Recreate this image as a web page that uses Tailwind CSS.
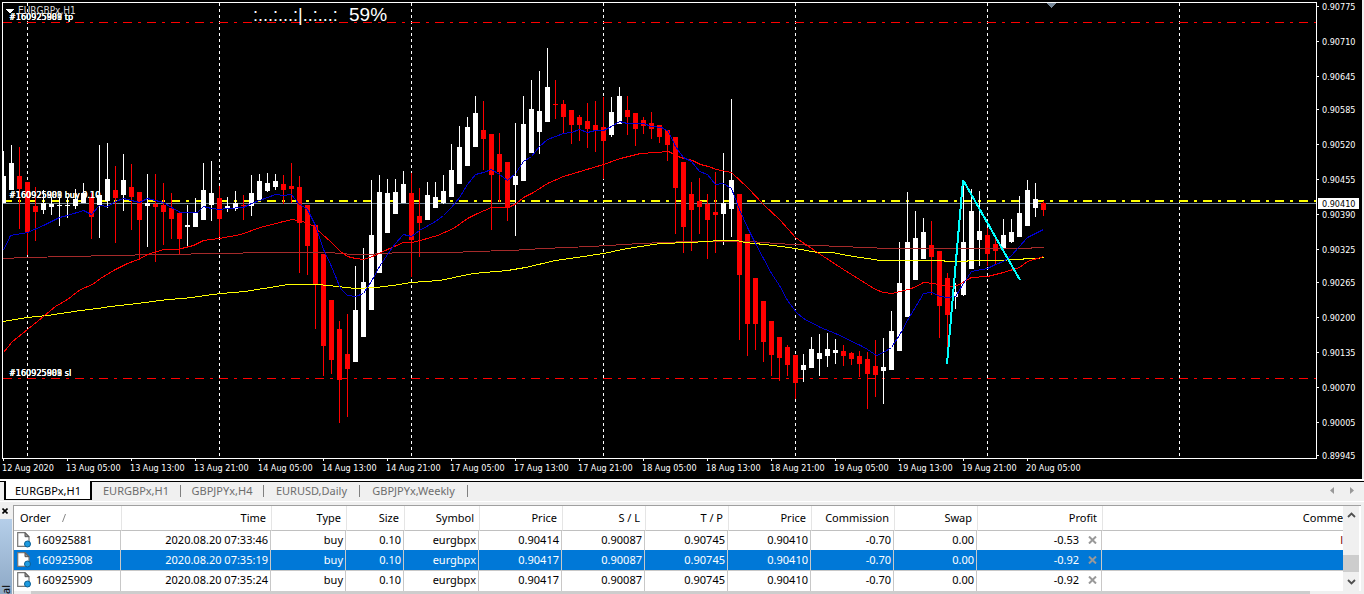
<!DOCTYPE html>
<html lang="en">
<head>
<meta charset="utf-8">
<title>EURGBPx,H1</title>
<script src="https://cdn.jsdelivr.net/npm/@tailwindcss/browser@4"></script>
</head>
<body class="flex h-screen flex-col overflow-hidden bg-[#f0f0f0] font-['Noto_Sans',sans-serif] text-[11px] leading-4 text-black">
<main class="shrink-0 pr-0.5">
<svg id="chart" viewBox="0 0 1362 479" class="block h-auto w-full bg-black font-['DejaVu_Sans_Condensed','DejaVu_Sans',sans-serif] text-[9px] [font-stretch:condensed]" role="img" aria-label="EURGBPx hourly chart">
  <g shape-rendering="crispEdges" fill="none">
    <path stroke="#fff" stroke-dasharray="3 3" d="M27.5 3V456M219.5 3V456M411.5 3V456M603.5 3V456M795.5 3V456M987.5 3V456M1179.5 3V456"/>
    <path stroke="#f00" stroke-dasharray="9 6 3 6" d="M3 22.5H1316M3 378.5H1316"/>
    <path stroke="#ff0" stroke-width="2" stroke-dasharray="9 6 3 6" d="M3 201H1316"/>
    <path stroke="#778899" d="M3 203.5H1316"/>
    <g id="candles"></g>
    <polyline id="slow" stroke="#a52a2a"/>
    <polyline id="trend" stroke="#ff0"/>
    <polyline id="mid" stroke="#f00"/>
    <polyline id="fast" stroke="#0000cd"/>
    <polyline stroke="#0ff" stroke-width="2" stroke-linejoin="bevel" points="947,364 963,180 1020,280"/>
    <path stroke="#fff" d="M2.5 458.5V2.5H1316.5V458.5Z"/>
    <path id="ticks" stroke="#fff"/>
    <path fill="#778899" d="M1046 3h11l-5.500 5z"/>
    <path fill="#fff" d="M5 9h9l-4.500 4.500z"/>
  </g>
  <g id="labels" fill="#fff"></g>
  <rect x="1318" y="198" width="41" height="11" fill="#fff"/>
  <text x="1322" y="207" fill="#000">0.90410</text>
  <text x="18" y="14" fill="#d8d8d8" class="text-[10px]">EURGBPx,H1</text>
  <g fill="#fff" class="font-['Liberation_Sans',Arial,sans-serif] [font-stretch:normal]">
    <text x="253" y="21" class="text-[18px]">:...:...:|..:...:</text>
    <text x="349" y="21" class="text-[19px]">59%</text>
  </g>
</svg>
</main>

<nav class="flex h-[23px] shrink-0 flex-col border-t-2 border-b border-white text-[#6d6d6d]">
  <div class="flex h-5 items-stretch">
    <span class="w-1 border-t border-black"></span>
    <button class="h-[19px] w-22 border-x-2 border-b border-black bg-white pt-px text-center text-black">EURGBPx,H1</button>
    <div class="flex flex-1 items-center border-t border-black pb-0.5">
      <button class="w-[88px] text-center">EURGBPx,H1</button><span class="h-3 w-px bg-[#808080]"></span>
      <button class="w-[82px] text-center">GBPJPYx,H4</button><span class="h-3 w-px bg-[#808080]"></span>
      <button class="w-[95px] text-center">EURUSD,Daily</button><span class="h-3 w-px bg-[#808080]"></span>
      <button class="w-[107px] text-center">GBPJPYx,Weekly</button><span class="h-3 w-px bg-[#808080]"></span>
      <button class="ml-auto w-5" aria-label="Scroll tabs left"><svg class="mx-auto" width="4" height="7" viewBox="0 0 4 7"><path d="M4 0v7L0 3.500z" fill="#999"/></svg></button>
      <button class="mr-0.5 w-5" aria-label="Scroll tabs right"><svg class="mx-auto" width="4" height="7" viewBox="0 0 4 7"><path d="M0 0v7l4-3.500z" fill="#999"/></svg></button>
    </div>
  </div>
</nav>

<section class="flex min-h-0 flex-1 overflow-hidden pt-[3px] pr-[3px]">
  <aside class="flex w-[13px] shrink-0 flex-col pr-px">
    <button class="flex h-3 items-center pl-0.5" aria-label="Close panel"><svg width="6" height="6" viewBox="0 0 6 6"><path d="M.5.5l5 5M5.500.5l-5 5" stroke="#000" stroke-width="1.600"/></svg></button>
    <div class="mt-0.5 flex flex-1 items-end bg-gradient-to-b from-[#b5cee9] to-[#8ea9c6]"><span class="rotate-180 text-[11px] leading-3 [writing-mode:vertical-rl]">al</span></div>
  </aside>
  <div class="flex min-w-0 flex-1 flex-col border-t border-l border-[#a0a0a0] bg-white">
    <div class="flex h-[85px] shrink-0">
      <div class="min-w-0 flex-1 overflow-hidden">
        <table class="w-[1345px] table-fixed border-separate border-spacing-0 whitespace-nowrap">
          <colgroup><col class="w-[107px]"><col class="w-[150px]"><col class="w-[75px]"><col class="w-[58px]"><col class="w-[75px]"><col class="w-[83px]"><col class="w-[83px]"><col class="w-[83px]"><col class="w-[83px]"><col class="w-[83px]"><col class="w-[83px]"><col class="w-[125px]"><col></colgroup>
          <thead><tr class="h-[25px] text-right *:border-b *:border-b-[#c0c0c0] *:border-l-[#e5e5e5] *:p-0 *:pr-[5px] *:font-normal">
            <th scope="col" class="text-left"><span class="flex items-center pl-1.5">Order<svg class="ml-3" width="4" height="8" viewBox="0 0 4 8"><path d="M3.500 0L.5 8" stroke="#888" fill="none"/></svg></span></th>
            <th scope="col" class="border-l">Time</th><th scope="col" class="border-l">Type</th><th scope="col" class="border-l">Size</th><th scope="col" class="border-l">Symbol</th><th scope="col" class="border-l">Price</th><th scope="col" class="border-l">S / L</th><th scope="col" class="border-l">T / P</th><th scope="col" class="border-l">Price</th><th scope="col" class="border-l">Commission</th><th scope="col" class="border-l">Swap</th><th scope="col" class="border-l">Profit</th><th scope="col" class="border-l">Comment</th>
          </tr></thead>
          <tbody id="orders"></tbody>
        </table>
      </div>
      <div class="mr-0.5 flex w-4 flex-col items-center bg-[#f0f0f0]">
        <button class="flex h-4.5 items-center" aria-label="Scroll up"><svg width="9" height="6" viewBox="0 0 9 6"><path d="M1 5l3.500-3.500L8 5" fill="none" stroke="#505050" stroke-width="1.800"/></svg></button>
        <div class="mt-[31px] h-[17px] w-full bg-[#cdcdcd]"></div>
        <button class="mt-auto flex h-4.5 items-center" aria-label="Scroll down"><svg width="9" height="6" viewBox="0 0 9 6"><path d="M1 1l3.500 3.500L8 1" fill="none" stroke="#505050" stroke-width="1.800"/></svg></button>
      </div>
    </div>
    <div class="flex-1 bg-[#f0f0f0] pr-[51px] pl-[17px]"><div class="h-full bg-[#cdcdcd]"></div></div>
  </div>
</section>

<script>
// Candles: [direction, high, body top, body bottom, low] in plot units, one every 8 units
const C = `w151 176 203 203,w145 163 190 190,r147 176 189 229,r182 182 232 255,r187 206 212 241,w190 203 210 214,w197 204 207 215,w197 205 206 226,w197 205 206 218,w189 199 206 209,w183 193 203 203,r193 197 217 239,w145 195 205 238,w143 179 201 208,r166 190 198 243,w154 180 195 211,r164 187 197 230,r192 192 220 258,w174 203 206 247,r174 204 207 262,r183 205 212 245,r193 208 219 239,r213 213 239 254,w205 225 227 246,w198 212 227 227,w163 190 220 220,w161 193 205 221,r186 198 219 237,w197 206 209 212,w191 203 209 211,r195 205 206 220,w175 193 206 216,w174 181 200 200,w173 183 191 192,w174 181 187 190,r175 184 190 204,r163 186 189 203,r176 187 223 273,r205 205 246 275,r225 225 284 329,r254 254 346 376,r300 300 360 374,r321 329 380 423,r314 354 369 417,w266 310 362 362,w248 282 337 337,w180 235 310 310,w175 192 273 273,w179 193 233 233,w179 192 214 214,w171 184 203 203,r173 193 240 277,r188 216 223 257,w182 195 220 220,w182 197 208 208,w175 191 203 204,w144 170 197 197,w126 147 184 184,w117 127 166 166,w96 113 147 147,r101 130 139 170,r134 134 175 230,r133 154 172 202,r162 162 207 221,w123 176 185 236,w96 124 181 181,w80 109 153 153,w71 111 132 154,w48 87 122 122,r80 104 105 119,r100 104 117 133,r110 110 125 144,r115 117 125 141,r103 121 129 148,r101 125 130 152,r97 127 141 179,w97 112 135 137,w87 96 124 124,r96 110 117 135,r113 113 129 146,r117 120 126 134,r112 123 129 139,r125 125 137 143,r130 130 145 161,r137 137 188 234,r162 162 227 253,r182 194 210 251,r178 201 207 234,r194 204 220 259,r172 212 215 253,w153 203 214 245,w99 180 209 237,r194 194 275 340,r234 234 324 356,r278 278 324 350,r301 301 342 362,r321 321 355 376,r337 337 358 381,r345 347 365 376,r355 355 383 399,w354 365 370 382,w337 349 368 368,w334 353 359 376,w333 349 356 367,w339 350 353 364,r345 351 356 366,r352 353 359 365,r351 356 364 377,r352 359 374 409,r340 366 375 397,w338 367 371 404,w311 331 370 370,w242 283 351 351,w192 242 317 317,w211 238 280 280,w218 232 259 259,r221 245 257 295,r251 251 306 338,r273 278 315 352,w283 292 297 309,w186 242 295 296,w189 211 269 269,w191 231 240 266,r228 235 254 266,r239 244 251 264,w219 235 248 248,w219 232 242 243,w196 213 237 237,w180 190 226 226,w183 199 208 217,r201 203 210 216`;
document.getElementById('candles').innerHTML = C.split(',').map((s, i) => {
  const x = 3 + 8 * i, [h, t, b, l] = s.slice(1).split(' ').map(Number), left = Math.max(3, x - 2);
  return `<path fill="${s[0] === 'w' ? '#fff' : '#f00'}" d="M${x} ${h}h1V${l}h-1zM${left} ${t}H${x + 3}V${b}H${left}z"/>`;
}).join('');

// Moving averages
const MA = {
  fast: '3,250 10,235 27,232 43,225 59,217 67,215 83,210 91,214 99,205 107,206 115,201 123,198 131,200 139,202 147,198 155,200 163,202 171,207 180,212 197,212 203,206 211,208 219,209 227,208 243,207 251,203 259,200 267,197 275,194 283,195 291,194 298,203 307,209 315,225 323,249 331,266 340,288 347,295 355,296 363,293 372,279 379,266 387,254 395,243 403,234 411,236 419,230 435,221 443,215 451,207 459,197 467,184 475,174 483,172 491,169 499,174 507,180 515,173 523,161 531,156 539,146 547,139 563,133 571,132 579,129 587,132 595,130 603,130 611,126 619,121 627,123 643,123 651,126 661,127 668,131 675,146 683,157 691,161 699,171 707,174 715,184 723,183 731,188 739,209 747,227 755,243 771,273 779,285 787,300 796,312 803,318 820,327 835,333 860,345 867,349 876,355 883,352 891,347 900,333 908,318 916,305 923,293 931,292 940,296 947,297 955,296 963,283 971,271 987,268 995,264 1003,261 1011,255 1019,246 1027,237 1043,229',
  mid: '3,352 12,341 27,329 43,316 55,306 67,299 80,289 92,284 100,278 115,269 127,263 138,259 147,254 163,249 177,249 193,245 203,240 219,238 240,234 260,227 283,221 292,219 302,221 312,225 331,242 340,251 347,256 355,258 363,259 372,256 387,249 403,242 411,242 420,240 437,235 453,228 467,218 477,213 491,207 508,207 516,203 523,197 533,192 547,183 563,176 583,170 603,164 620,158 640,153 655,152 668,151 680,157 692,160 700,164 708,166 716,169 731,172 747,187 763,204 780,220 795,237 820,254 843,269 875,289 883,292 891,293 908,289 916,286 923,282 933,283 948,286 957,285 971,277 987,276 1003,272 1019,267 1027,261 1043,256',
  slow: '3,258 24,257 71,256 111,255 159,254 223,253 262,252 328,252 352,254 366,254 400,252 455,252 471,251 510,250 543,248 590,246 607,245 640,243 687,241 750,241 776,243 792,244 816,245 840,246 864,247 888,248 1028,248 1034,247 1043,247',
  trend: '3,321 15,319 27,317 47,315 67,312 80,310 97,308 110,306 137,303 167,299 183,298 220,293 245,291 263,288 288,284 317,284 337,286 355,288 375,287 392,285 411,282 439,280 473,273 507,270 525,267 555,260 583,256 603,253 622,249 640,246 660,243 690,242 720,240 736,240 745,242 773,245 795,248 817,252 832,252 847,255 880,260 943,260 945,261 966,261 968,260 1005,260 1007,259 1022,259 1024,258 1038,258 1040,257 1043,257'
};
for (const id in MA) document.getElementById(id).setAttribute('points', MA[id].replace(/\d+/g, n => +n + 0.5));

// Axis scales and order level captions
const prices = [['0.90775', 6], ['0.90710', 41], ['0.90645', 76], ['0.90585', 109], ['0.90520', 144], ['0.90455', 179], ['0.90390', 214], ['0.90325', 249], ['0.90265', 282], ['0.90200', 317], ['0.90135', 352], ['0.90070', 387], ['0.90005', 422], ['0.89945', 455]];
const times = ['12 Aug 2020'];
for (const d of [13, 14, 17, 18, 19, 20]) for (const h of ['05', '13', '21']) if (d < 20 || h === '05') times.push(`${d} Aug ${h}:00`);
let ticks = '', labels = '';
for (const [p, y] of prices) { ticks += `M1317 ${y + 0.5}h2`; labels += `<text x="1322" y="${y + 4}">${p}</text>`; }
times.forEach((t, i) => { ticks += `M${3.5 + 64 * i} 459v2`; labels += `<text x="${2 + 64 * i}" y="471">${t}</text>`; });
for (const [s, y] of [['tp', 20], ['buy 0.10', 198], ['sl', 376]]) for (const n of [160925881, 160925908, 160925909]) labels += `<text x="9" y="${y}">#${n} ${s}</text>`;
document.getElementById('ticks').setAttribute('d', ticks);
document.getElementById('labels').innerHTML = labels;

// Open orders
const rows = [['160925881', '07:33:46', '0.90414', '-0.53'], ['160925908', '07:35:19', '0.90417', '-0.92'], ['160925909', '07:35:24', '0.90417', '-0.92']];
document.getElementById('orders').innerHTML = rows.map(([id, t, p, profit], i) => {
  const td = v => `<td class="border-r border-r-[#c8c8c8] pr-0.5">${v}</td>`;
  const cls = ['h-[19px] *:pb-0.5', 'h-[21px] bg-[#0078d7] text-white *:border-b *:border-b-[#c8c8c8] *:pb-0', 'h-5 *:pb-0.5'][i];
  return `<tr class="${cls} text-right leading-4 *:pt-0 *:pl-0">
  <td class="border-r border-r-[#c8c8c8] pr-0"><span class="flex items-center gap-[5px] pl-[3px]"><svg width="14" height="16" viewBox="0 0 14 16"><path d="M.7.7h7.300l4 4v9.600H.7z" fill="#fff" stroke="#777" stroke-width="1.200"/><path d="M8 .7v4h4z" fill="#999" stroke="#555"/><circle cx="10.500" cy="12" r="3" fill="#1e9be0" stroke="#0b5f95"/></svg>${id}</span></td>
  ${['2020.08.20 ' + t, 'buy', '0.10', 'eurgbpx', p, '0.90087', '0.90745', '0.90410', '-0.70', '0.00'].map(td).join('')}
  <td class="border-r border-r-[#c8c8c8] pr-1"><span class="flex items-center justify-end gap-[9px]">${profit}<button aria-label="Close order ${id}"><svg width="9" height="8" viewBox="0 0 9 8"><path d="M1 .5l7 7M8 .5l-7 7" stroke="#999" stroke-width="2"/></svg></button></span></td>
  <td class="pr-4 text-[#800000]">${i === 0 ? 'l' : ''}</td></tr>`;
}).join('');
</script>
</body>
</html>
